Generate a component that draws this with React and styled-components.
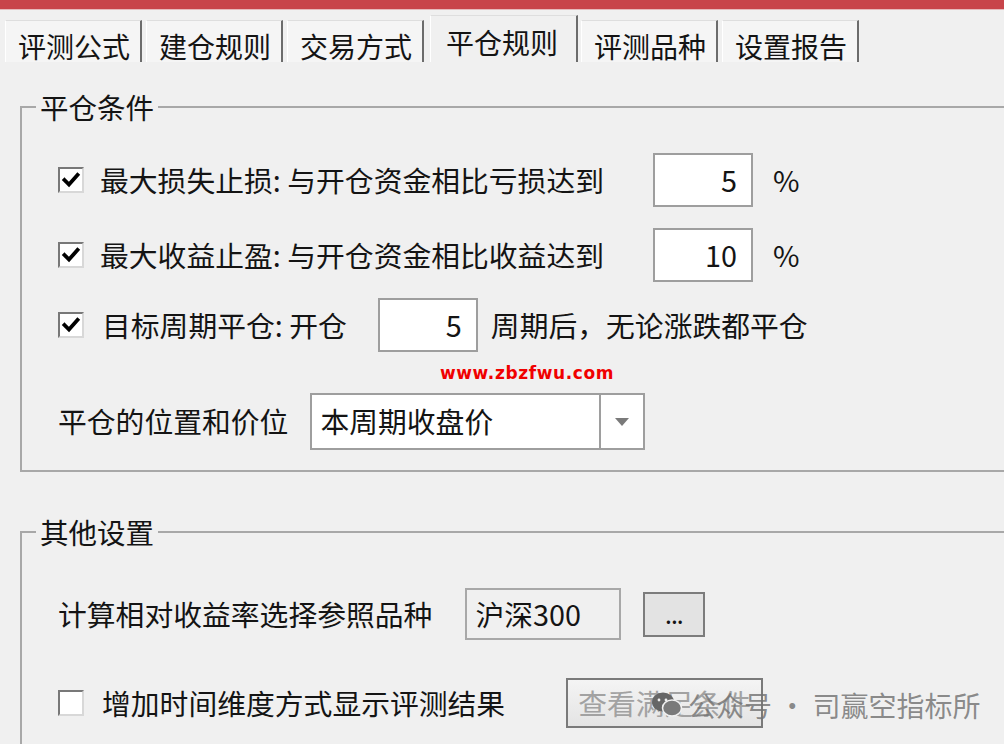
import styled, { createGlobalStyle } from 'styled-components'

const colors = {
  page: '#f0f0f0',
  titleRed: '#c8444a',
  frame: '#a8a8a8',
  field: '#9e9e9e',
  tabEdge: '#6c6c6c',
  text: '#141414',
  disabled: '#a2a2a2',
  mark: 'rgba(115, 115, 115, 0.82)',
}

const tabs = ['评测公式', '建仓规则', '交易方式', '平仓规则', '评测品种', '设置报告']
const activeTab = 3

const GlobalStyle = createGlobalStyle`
  html, body {
    margin: 0;
    padding: 0;
    background: ${colors.page};
  }
  body {
    font-family: "Noto Sans CJK SC", "Noto Sans", sans-serif;
    color: ${colors.text};
  }
`

function CheckBox({ checked }) {
  return (
    <Box>
      {checked && (
        <svg width="22" height="22" viewBox="0 0 22 22">
          <path d="M4.5 11 L9 15.5 L17.5 6" fill="none" stroke="#000" strokeWidth="3.8" strokeLinecap="square" />
        </svg>
      )}
    </Box>
  )
}

function WeChatMark() {
  return (
    <svg width="34" height="30" viewBox="0 0 34 30">
      <ellipse cx="13" cy="12" rx="11" ry="9.5" fill="#666" />
      <ellipse cx="22" cy="18" rx="9.5" ry="8" fill="#7a7a7a" stroke="#f0f0f0" strokeWidth="1.5" />
      <circle cx="9" cy="10" r="1.4" fill="#f0f0f0" />
      <circle cx="16" cy="10" r="1.4" fill="#f0f0f0" />
    </svg>
  )
}

function App() {
  return (
    <Window>
      <GlobalStyle />
      <TitleStrip />
      <TabBar>
        {tabs.map((t, i) => (
          <Tab key={t} $active={i === activeTab}>{t}</Tab>
        ))}
      </TabBar>

      <Panel>
        <Group $top={29} $padTop={30}>
          <Legend>平仓条件</Legend>

          <Row $h={54}>
            <CheckBox checked />
            <Label $w={553}>最大损失止损: 与开仓资金相比亏损达到</Label>
            <NumberField>5</NumberField>
            <Unit>%</Unit>
          </Row>

          <Row $h={54} $gap={21}>
            <CheckBox checked />
            <Label $w={553}>最大收益止盈: 与开仓资金相比收益达到</Label>
            <NumberField>10</NumberField>
            <Unit>%</Unit>
          </Row>

          <Row $h={54} $gap={16}>
            <CheckBox checked />
            <Label $ml={2}>目标周期平仓: 开仓</Label>
            <NumberField $ml={31}>5</NumberField>
            <Label $ml={13}>周期后，无论涨跌都平仓</Label>
          </Row>

          <SiteRow>www.zbzfwu.com</SiteRow>

          <Row $h={57}>
            <Label>平仓的位置和价位</Label>
            <Select>
              <SelectText>本周期收盘价</SelectText>
              <SelectArrow><Caret /></SelectArrow>
            </Select>
          </Row>
        </Group>

        <Group $top={44} $padTop={40}>
          <Legend>其他设置</Legend>

          <Row $h={52}>
            <Label>计算相对收益率选择参照品种</Label>
            <ReadBox>沪深300</ReadBox>
            <DotsButton>...</DotsButton>
          </Row>

          <Row $h={50} $gap={38}>
            <CheckBox />
            <Label $ml={2}>增加时间维度方式显示评测结果</Label>
            <ActionButton>查看满足条件</ActionButton>
          </Row>
        </Group>
      </Panel>

      <Watermark>
        <WeChatMark />
        <span>公众号 · 司赢空指标所</span>
      </Watermark>
    </Window>
  )
}

export default App

const Window = styled.div`
  position: relative;
  width: 1004px;
  height: 744px;
  overflow: hidden;
  background: ${colors.page};
  font-size: 28.8px;
`

const TitleStrip = styled.div`
  height: 9px;
  background: ${colors.titleRed};
  border-bottom: 1px solid #e6b9bb;
`

const TabBar = styled.div`
  display: flex;
  align-items: flex-end;
  height: 52px;
  padding-left: 5px;
`

const Tab = styled.div`
  box-sizing: border-box;
  display: flex;
  align-items: center;
  height: ${({ $active }) => ($active ? 47 : 42)}px;
  padding: ${({ $active }) => ($active ? '6px 18px 0 15px' : '8px 10px 0 12px')};
  margin: ${({ $active }) => ($active ? '0 3px 0 2px' : '0 4px 0 0')};
  background: ${({ $active }) => ($active ? colors.page : '#f5f5f5')};
  border-top: 1px solid #dedede;
  border-left: 1px solid #ffffff;
  border-right: 2px solid ${colors.tabEdge};
  font-size: 28px;
  line-height: 1;
  white-space: nowrap;
`

const Panel = styled.div`
  padding-left: 20px;
`

const Group = styled.fieldset`
  box-sizing: border-box;
  width: 1000px;
  min-width: 0;
  margin: ${({ $top }) => $top}px 0 0 0;
  padding: ${({ $padTop }) => $padTop}px 0 20px 36px;
  border: 2px solid ${colors.frame};
`

const Legend = styled.legend`
  margin-left: -22px;
  padding: 0 4px;
  line-height: 32px;
  font-size: 28.5px;
`

const Row = styled.div`
  display: flex;
  align-items: center;
  height: ${({ $h }) => $h}px;
  margin-top: ${({ $gap }) => $gap || 0}px;
`

const Box = styled.span`
  box-sizing: border-box;
  display: flex;
  align-items: center;
  justify-content: center;
  flex: none;
  width: 26px;
  height: 26px;
  margin-right: 16px;
  background: #fff;
  border: 2px solid;
  border-color: #787878 #d8d8d8 #d8d8d8 #787878;
`

const Label = styled.span`
  flex: none;
  width: ${({ $w }) => ($w ? `${$w}px` : 'auto')};
  margin-left: ${({ $ml }) => $ml || 0}px;
  white-space: nowrap;
  line-height: 1;
`

const NumberField = styled.div`
  box-sizing: border-box;
  flex: none;
  width: 100px;
  height: 54px;
  margin-left: ${({ $ml }) => $ml || 0}px;
  padding-right: 14px;
  display: flex;
  align-items: center;
  justify-content: flex-end;
  background: #fff;
  border: 2px solid ${colors.field};
  line-height: 1;
`

const Unit = styled.span`
  margin-left: 20px;
  line-height: 1;
`

const SiteRow = styled.div`
  height: 41px;
  display: flex;
  align-items: center;
  padding-left: 382px;
  font-family: "DejaVu Sans", sans-serif;
  font-weight: bold;
  font-size: 17px;
  letter-spacing: 0.6px;
  color: #f00000;
`

const Select = styled.div`
  box-sizing: border-box;
  display: flex;
  width: 335px;
  height: 57px;
  margin-left: 22px;
  background: #fff;
  border: 2px solid ${colors.field};
`

const SelectText = styled.div`
  flex: 1;
  display: flex;
  align-items: center;
  padding-left: 8px;
  line-height: 1;
`

const SelectArrow = styled.div`
  width: 42px;
  display: flex;
  align-items: center;
  justify-content: center;
  border-left: 2px solid ${colors.field};
`

const Caret = styled.span`
  width: 0;
  height: 0;
  border-left: 7px solid transparent;
  border-right: 7px solid transparent;
  border-top: 8px solid #7a7a7a;
`

const ReadBox = styled.div`
  box-sizing: border-box;
  width: 156px;
  height: 52px;
  margin-left: 33px;
  padding-left: 8px;
  display: flex;
  align-items: center;
  border: 2px solid ${colors.frame};
  line-height: 1;
`

const DotsButton = styled.div`
  box-sizing: border-box;
  width: 62px;
  height: 45px;
  margin-left: 22px;
  display: flex;
  align-items: flex-end;
  justify-content: center;
  padding-bottom: 10px;
  background: #e3e3e3;
  border: 2px solid #7c7c7c;
  font-size: 18px;
  font-weight: bold;
  line-height: 1;
`

const ActionButton = styled.div`
  box-sizing: border-box;
  width: 197px;
  height: 50px;
  margin-left: 61px;
  padding-left: 10px;
  display: flex;
  align-items: center;
  background: linear-gradient(#f4f4f4, #e4e4e4);
  border: 2px solid #7a7a7a;
  color: ${colors.disabled};
  line-height: 1;
  white-space: nowrap;
  overflow: hidden;
`

const Watermark = styled.div`
  position: absolute;
  left: 650px;
  top: 688px;
  display: flex;
  align-items: center;
  gap: 4px;
  font-size: 28px;
  line-height: 34px;
  color: ${colors.mark};
  white-space: nowrap;
`
